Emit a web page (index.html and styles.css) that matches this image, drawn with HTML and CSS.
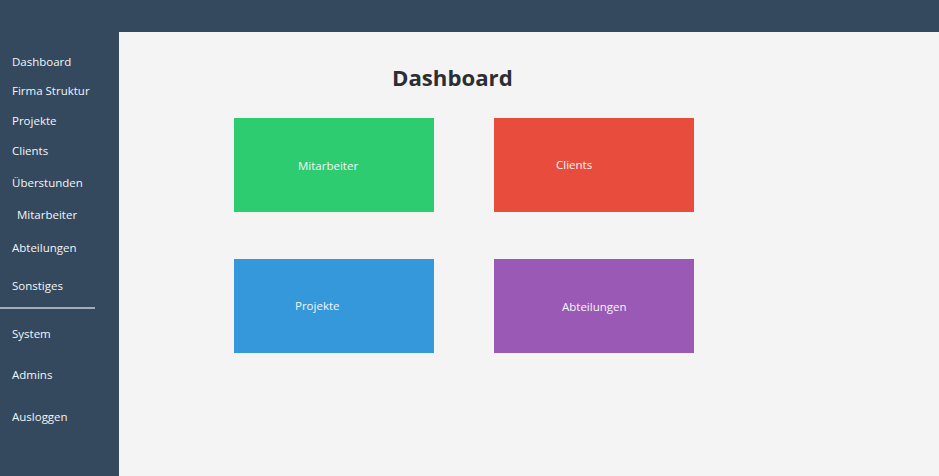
FILE: index.html
```html
<!DOCTYPE html>
<html lang="de">
<head>
<meta charset="utf-8">
<title>Dashboard</title>
<link rel="stylesheet" href="styles.css">
</head>
<body>
<header class="topbar"></header>
<div class="layout">
  <nav class="sidebar">
    <div class="nav-item h29">Dashboard</div>
    <div class="nav-item h30">Firma Struktur</div>
    <div class="nav-item h30">Projekte</div>
    <div class="nav-item h32">Clients</div>
    <div class="nav-item h32">Überstunden</div>
    <div class="nav-item h33 sub">Mitarbeiter</div>
    <div class="nav-item h38">Abteilungen</div>
    <div class="nav-item h37">Sonstiges</div>
    <hr class="divider">
    <div class="nav-item h41 first-after">System</div>
    <div class="nav-item h42">Admins</div>
    <div class="nav-item h30">Ausloggen</div>
  </nav>
  <main class="content">
    <h1 class="title">Dashboard</h1>
    <div class="tiles">
      <div class="tile green"><span class="tile-label l-mit">Mitarbeiter</span></div>
      <div class="tile red"><span class="tile-label l-cli">Clients</span></div>
      <div class="tile blue"><span class="tile-label l-pro">Projekte</span></div>
      <div class="tile purple"><span class="tile-label l-abt">Abteilungen</span></div>
    </div>
  </main>
</div>
</body>
</html>
```
FILE: styles.css
```css
* { box-sizing: border-box; }
html, body { margin: 0; height: 100%; }
body {
  font-family: "Open Sans", "Noto Sans", sans-serif;
  background: #34495e;
  overflow: hidden;
}
.topbar {
  height: 32px;
  background: #34495e;
}
.layout {
  display: flex;
  height: 444px;
}
.sidebar {
  width: 119px;
  flex: 0 0 119px;
  background: #34495e;
  padding-top: 15px;
  display: flex;
  flex-direction: column;
}
.nav-item {
  color: #f2f5f7;
  font-size: 11.5px;
  padding-left: 12px;
  height: 30px;
  line-height: 30px;
  white-space: nowrap;
}
.nav-item.sub { padding-left: 17px; }
.h29 { height: 29px; }
.h30 { height: 30px; }
.h32 { height: 32px; }
.h33 { height: 33px; }
.h38 { height: 38px; }
.h37 { height: 36px; }
.h41 { height: 41px; }
.h42 { height: 42px; }
.nav-item.first-after { margin-top: 10px; }
.divider {
  margin: 0;
  border: 0;
  height: 2px;
  width: 95px;
  background: #a3adb8;
}
.content {
  flex: 1;
  background: #f4f4f4;
  padding: 31px 0 0 115px;
}
.title {
  margin: 0 0 0 158px;
  font-size: 22.2px;
  font-weight: 700;
  color: #2b2f33;
  line-height: 30px;
}
.tiles {
  margin-top: 25px;
  display: grid;
  grid-template-columns: 200px 200px;
  column-gap: 60px;
  row-gap: 47px;
}
.tile {
  height: 94px;
  display: flex;
  align-items: center;
  color: #f3f6f8;
  font-size: 11.5px;
}
.green { background: #2ecc71; }
.red { background: #e74c3c; }
.blue { background: #3498db; }
.purple { background: #9b59b6; }
.l-mit { padding-left: 64px; }
.l-cli { padding-left: 62px; padding-bottom: 1px; }
.l-pro { padding-left: 61px; padding-bottom: 1px; }
.l-abt { padding-left: 68px; }
```
